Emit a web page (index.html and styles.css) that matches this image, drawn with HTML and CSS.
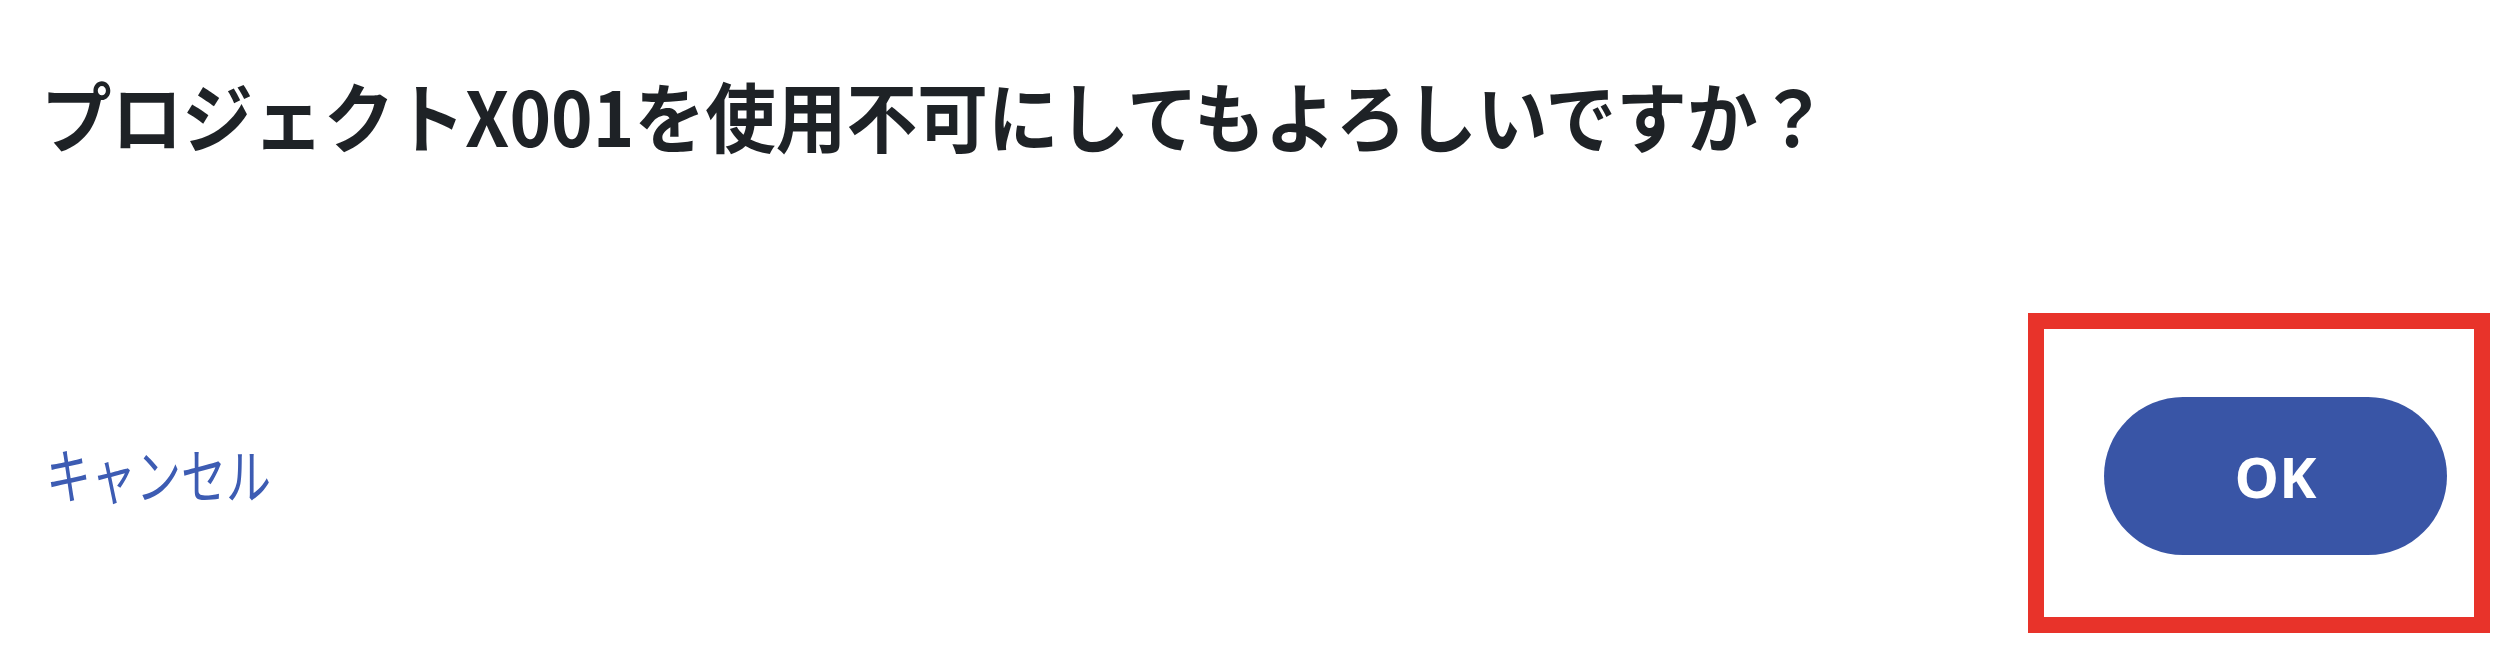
FILE: index.html
```html
<!DOCTYPE html>
<html lang="ja">
<head>
<meta charset="utf-8">
<title>確認</title>
<link rel="stylesheet" href="styles.css">
</head>
<body>
<div class="dialog">
  <h1 class="title"><span class="title-text">プロジェクトX001を使用不可にしてもよろしいですか？</span></h1>
  <div class="footer">
    <a class="cancel" href="#"><span class="cancel-text">キャンセル</span></a>
    <div class="highlight">
      <button class="ok" type="button">OK</button>
    </div>
  </div>
</div>
</body>
</html>
```

FILE: styles.css
```css
html, body {
  margin: 0;
  padding: 0;
  background: #ffffff;
}

.dialog {
  width: 2512px;
  height: 658px;
  box-sizing: border-box;
  padding: 0 22px 0 48px;
  display: flex;
  flex-direction: column;
}

.title {
  margin: 76px 0 0 -7px;
  font-family: "Noto Sans CJK JP", "Noto Sans", sans-serif;
  font-weight: 700;
  font-size: 76px;
  line-height: 76px;
  color: #1e2226;
  white-space: nowrap;
}

.title-text {
  display: inline-block;
  transform: scaleX(0.93);
  transform-origin: left center;
}

.footer {
  margin-top: 161px;
  display: flex;
  justify-content: space-between;
  align-items: center;
}

.cancel {
  margin-left: -2px;
  font-family: "Noto Sans CJK JP", "Noto Sans", sans-serif;
  font-weight: 400;
  font-size: 60px;
  line-height: 60px;
  color: #3d5cb3;
  text-decoration: none;
}

.cancel-text {
  display: inline-block;
  transform: scaleX(0.75);
  transform-origin: left center;
}

.highlight {
  border: 16px solid #e8332a;
  padding: 68px 27px 62px 60px;
  display: flex;
}

.ok {
  width: 343px;
  height: 158px;
  border: none;
  border-radius: 79px;
  background: #3955a6;
  color: #ffffff;
  font-family: "Open Sans", "Liberation Sans", sans-serif;
  font-weight: 700;
  font-size: 56px;
  padding: 0;
}
```
